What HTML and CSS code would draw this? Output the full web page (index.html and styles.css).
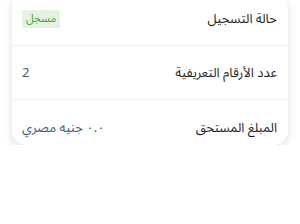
FILE: index.html
```html
<!DOCTYPE html>
<html lang="ar" dir="rtl">
<head>
<meta charset="utf-8">
<link rel="stylesheet" href="styles.css">
</head>
<body>
<div class="card">
  <div class="row row-first">
    <span class="label">حالة التسجيل</span>
    <span class="badge">مسجل</span>
  </div>
  <div class="row">
    <span class="label">عدد الأرقام التعريفية</span>
    <span class="value">2</span>
  </div>
  <div class="row row-last">
    <span class="label">المبلغ المستحق</span>
    <span class="value">٠.٠ جنيه مصري</span>
  </div>
</div>
</body>
</html>
```
FILE: styles.css
```css
html, body {
  margin: 0;
  padding: 0;
  background: #ffffff;
}
body {
  font-family: "Noto Sans Arabic", "Noto Sans", "DejaVu Sans", sans-serif;
  overflow: hidden;
}
.card {
  margin: -7px 12px 0;
  background: #ffffff;
  border-radius: 14px;
  box-shadow: 0 3px 8px rgba(0, 0, 0, 0.13);
}
.row {
  box-sizing: border-box;
  height: 54px;
  display: flex;
  align-items: center;
  justify-content: space-between;
  padding: 0 11px 0 10px;
  border-bottom: 1px solid #efefef;
}
.row-first {
  height: 53px;
}
.row-last {
  height: 45px;
  padding-top: 10px;
  border-bottom: none;
}
.label {
  font-size: 13px;
  color: #1f1f1f;
}
.value {
  font-size: 13px;
  color: #3b5a86;
}
.badge {
  font-size: 11px;
  color: #3fa535;
  background: #e4f3e1;
  padding: 0 4px;
  height: 18px;
  line-height: 18px;
  border-radius: 2px;
}
```
